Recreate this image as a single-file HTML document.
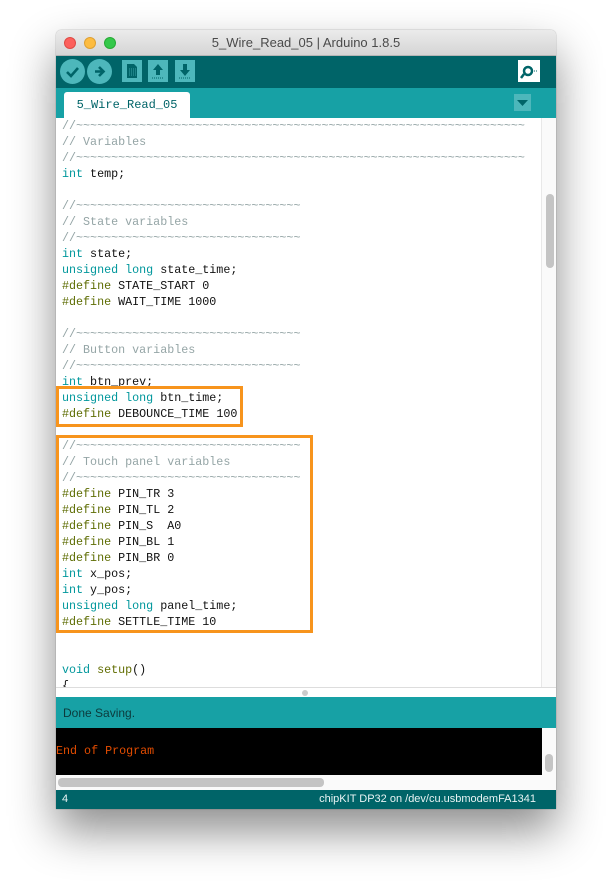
<!DOCTYPE html>
<html><head><meta charset="utf-8"><style>
*{margin:0;padding:0;box-sizing:border-box}
body{width:612px;height:889px;background:#fff;position:relative;overflow:hidden;font-family:"Liberation Sans",sans-serif}
.win{position:absolute;left:56px;top:30px;width:500px;height:779px;background:#fff;box-shadow:0 22px 45px rgba(0,0,0,.45),0 0 1px rgba(0,0,0,.5);border-radius:5px 5px 0 0;overflow:hidden}
.title{position:absolute;left:0;top:0;width:500px;height:26px;background:linear-gradient(#ebebeb,#d5d5d5);border-bottom:1px solid #b5b5b5;text-align:center;font-size:13px;line-height:26px;color:#4a4a4a}
.dot{position:absolute;top:7px;width:12px;height:12px;border-radius:50%}
.tb{position:absolute;left:0;top:26px;width:500px;height:32px;background:#006468}
.circ{position:absolute;top:3px;width:25px;height:25px;border-radius:50%;background:#4db7bb}
.sq{position:absolute;top:4px;width:20px;height:22px;background:#4db7bb}
.tabs{position:absolute;left:0;top:58px;width:500px;height:30px;background:#17a1a5}
.tab{position:absolute;left:8px;top:4px;width:126px;height:26px;background:#fff;border-radius:3px 3px 0 0;font-family:"Liberation Mono",monospace;font-size:12px;color:#006468;line-height:27px;text-align:center}
.ed{position:absolute;left:0;top:88px;width:485px;height:569px;overflow:hidden}
pre{font-family:"Liberation Mono",monospace;font-size:11.7px;line-height:16px;color:#111;position:absolute;left:6px;top:0px}
.c{color:#95a5a6}.k{color:#00979c}.d{color:#5e6d03}.f{color:#626e03}
.vs{position:absolute;left:485px;top:88px;width:15px;height:569px;background:#fafafa;border-left:1px solid #e8e8e8}
.thumb{position:absolute;left:4px;top:76px;width:8px;height:74px;border-radius:4px;background:#c4c4c4}
.box{position:absolute;border:3px solid #f7941d}
.div{position:absolute;left:0;top:657px;width:500px;height:10px;background:#fff;border-top:1px solid #ddd}
.st{position:absolute;left:0;top:667px;width:500px;height:31px;background:#17a1a5;color:#0c3a3c;font-size:12px;line-height:32px;padding-left:7px}
.con{position:absolute;left:0;top:698px;width:486px;height:47px;background:#000;color:#e34c00;font-family:"Liberation Mono",monospace;font-size:11.7px;line-height:46px}
.cvs{position:absolute;left:486px;top:698px;width:14px;height:62px;background:#fafafa}
.hs{position:absolute;left:0;top:745px;width:486px;height:15px;background:#fafafa}
.ft{position:absolute;left:0;top:760px;width:500px;height:19px;background:#006468;color:#e8f4f4;font-size:11px;line-height:19px}
</style></head><body>
<div class="win">
<div class="title">5_Wire_Read_05 | Arduino 1.8.5
<div class="dot" style="left:8px;background:#fc605c;border:1px solid #de4a44"></div>
<div class="dot" style="left:28px;background:#fdbc40;border:1px solid #dea033"></div>
<div class="dot" style="left:48px;background:#34c84a;border:1px solid #27aa35"></div>
</div>
<div class="tb">
<div class="circ" style="left:4px"><svg width="25" height="25"><path d="M7 13l4 4 7-8" stroke="#006468" stroke-width="2.6" fill="none"/></svg></div>
<div class="circ" style="left:31px"><svg width="25" height="25"><path d="M8 12.5h8M12 8l4.5 4.5L12 17" stroke="#006468" stroke-width="2.6" fill="none"/></svg></div>
<div class="sq" style="left:66px"><svg width="20" height="22"><path d="M5 4h7l3 3v11H5z" fill="#006468"/><path d="M7 9h7M7 11h7M7 13h7M7 15h7" stroke="#4db7bb" stroke-width=".8" stroke-dasharray="1 1"/></svg></div>
<div class="sq" style="left:92px"><svg width="20" height="22"><path d="M10 4l5 6h-3v5H8v-5H5z" fill="#006468"/><path d="M4 18h12" stroke="#006468" stroke-dasharray="1 1"/></svg></div>
<div class="sq" style="left:119px"><svg width="20" height="22"><path d="M10 16l5-6h-3V4H8v6H5z" fill="#006468"/><path d="M4 18h12" stroke="#006468" stroke-dasharray="1 1"/></svg></div>
<div style="position:absolute;left:462px;top:4px;width:22px;height:22px;background:#fff"><svg width="22" height="22"><circle cx="10" cy="11" r="4" stroke="#006468" stroke-width="2.5" fill="none"/><path d="M6 14l-3 4" stroke="#006468" stroke-width="2.5"/><path d="M16 11h4" stroke="#006468" stroke-dasharray="1 1"/></svg></div>
</div>
<div class="tabs"><div class="tab">5_Wire_Read_05</div>
<div style="position:absolute;left:458px;top:6px;width:17px;height:17px;background:#4db7bb"><svg width="17" height="17"><path d="M3 6h11l-5.5 6z" fill="#006468"/></svg></div></div>
<div class="ed"><pre><span class="c">//~~~~~~~~~~~~~~~~~~~~~~~~~~~~~~~~~~~~~~~~~~~~~~~~~~~~~~~~~~~~~~~~
// Variables
//~~~~~~~~~~~~~~~~~~~~~~~~~~~~~~~~~~~~~~~~~~~~~~~~~~~~~~~~~~~~~~~~</span>
<span class="k">int</span> temp;

<span class="c">//~~~~~~~~~~~~~~~~~~~~~~~~~~~~~~~~
// State variables
//~~~~~~~~~~~~~~~~~~~~~~~~~~~~~~~~</span>
<span class="k">int</span> state;
<span class="k">unsigned</span> <span class="k">long</span> state_time;
<span class="d">#define</span> STATE_START 0
<span class="d">#define</span> WAIT_TIME 1000

<span class="c">//~~~~~~~~~~~~~~~~~~~~~~~~~~~~~~~~
// Button variables
//~~~~~~~~~~~~~~~~~~~~~~~~~~~~~~~~</span>
<span class="k">int</span> btn_prev;
<span class="k">unsigned</span> <span class="k">long</span> btn_time;
<span class="d">#define</span> DEBOUNCE_TIME 100

<span class="c">//~~~~~~~~~~~~~~~~~~~~~~~~~~~~~~~~
// Touch panel variables
//~~~~~~~~~~~~~~~~~~~~~~~~~~~~~~~~</span>
<span class="d">#define</span> PIN_TR 3
<span class="d">#define</span> PIN_TL 2
<span class="d">#define</span> PIN_S  A0
<span class="d">#define</span> PIN_BL 1
<span class="d">#define</span> PIN_BR 0
<span class="k">int</span> x_pos;
<span class="k">int</span> y_pos;
<span class="k">unsigned</span> <span class="k">long</span> panel_time;
<span class="d">#define</span> SETTLE_TIME 10


<span class="k">void</span> <span class="f">setup</span>()
{</pre></div>
<div class="vs"><div class="thumb"></div></div>
<div class="box" style="left:0;top:356px;width:187px;height:41px"></div>
<div class="box" style="left:0;top:405px;width:257px;height:198px"></div>
<div class="div"><div style="position:absolute;left:246px;top:2px;width:6px;height:6px;border-radius:50%;background:#ccc"></div></div>
<div class="st">Done Saving.</div>
<div class="con">End of Program</div>
<div class="cvs"><div style="position:absolute;left:3px;top:26px;width:8px;height:18px;border-radius:4px;background:#c4c4c4"></div></div>
<div class="hs"><div style="position:absolute;left:2px;top:3px;width:266px;height:9px;border-radius:4px;background:#c4c4c4"></div></div>
<div class="ft"><span style="position:absolute;left:6px">4</span><span style="position:absolute;right:20px">chipKIT DP32 on /dev/cu.usbmodemFA1341</span></div>
</div>
</body></html>
